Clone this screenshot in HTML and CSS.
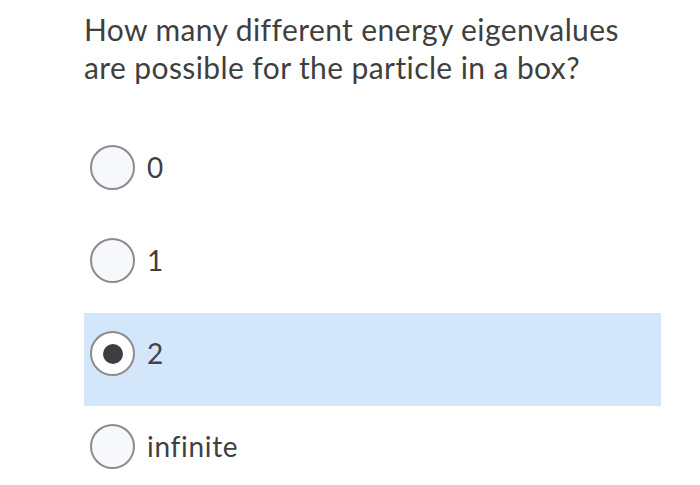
FILE: index.html
```html
<!DOCTYPE html>
<html>
<head>
<meta charset="utf-8">
<link rel="stylesheet" href="styles.css">
</head>
<body>
<div class="quiz">
  <p class="question">How many different energy eigenvalues are possible for the particle in a box?</p>
  <div class="options">
    <div class="option"><span class="radio"></span><span class="label">0</span></div>
    <div class="option"><span class="radio"></span><span class="label">1</span></div>
    <div class="option selected"><span class="radio checked"></span><span class="label">2</span></div>
    <div class="option"><span class="radio"></span><span class="label">infinite</span></div>
  </div>
</div>
</body>
</html>
```
FILE: styles.css
```css
html, body {
  margin: 0;
  padding: 0;
  background: #ffffff;
}
body {
  font-family: Lato, "Open Sans", sans-serif;
  color: #3f3f3f;
}
.quiz {
  width: 577px;
  padding: 10px 0 0 84px;
}
.question {
  margin: 0;
  font-size: 30px;
  letter-spacing: 0.4px;
  line-height: 38px;
  width: 560px;
}
.options {
  margin-top: 41px;
  display: flex;
  flex-direction: column;
}
.option {
  display: flex;
  align-items: center;
  gap: 12px;
  height: 93px;
  box-sizing: border-box;
  padding: 18px 0 30px 6px;
}
.option.selected {
  background: #d3e6fa;
}
.radio {
  width: 45px;
  height: 45px;
  box-sizing: border-box;
  border: 2px solid #8c8c8c;
  border-radius: 50%;
  background: #f6f8fc;
  flex: none;
  display: flex;
  align-items: center;
  justify-content: center;
}
.radio.checked {
  background: #ffffff;
}
.radio.checked::after {
  content: "";
  width: 20px;
  height: 20px;
  border-radius: 50%;
  background: #3c3e44;
}
.label {
  font-size: 28px;
  letter-spacing: 0.7px;
  line-height: 45px;
  color: #3f3f3f;
}
.selected .label {
  color: #3d4450;
}
```
